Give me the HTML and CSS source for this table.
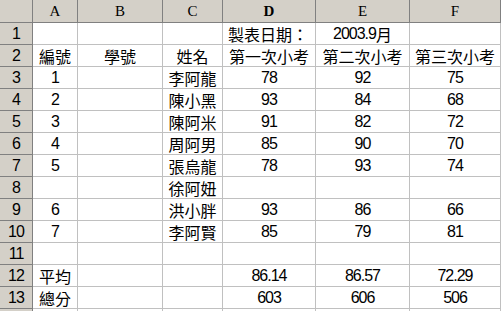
FILE: index.html
```html
<!DOCTYPE html>
<html lang="zh-Hant">
<head>
<meta charset="utf-8">
<title>成績表</title>
<link rel="stylesheet" href="styles.css">
</head>
<body>
<div class="sheet">
  <div class="corner"></div>
  <div class="colhead">A</div>
  <div class="colhead">B</div>
  <div class="colhead">C</div>
  <div class="colhead active">D</div>
  <div class="colhead">E</div>
  <div class="colhead">F</div>

  <div class="rowhead">1</div>
  <div class="cell"></div><div class="cell"></div><div class="cell"></div>
  <div class="cell left">製表日期：</div><div class="cell"><span class="num">2003.9</span>月</div><div class="cell"></div>

  <div class="rowhead">2</div>
  <div class="cell">編號</div><div class="cell">學號</div><div class="cell">姓名</div>
  <div class="cell">第一次小考</div><div class="cell">第二次小考</div><div class="cell">第三次小考</div>

  <div class="rowhead">3</div>
  <div class="cell num">1</div><div class="cell"></div><div class="cell">李阿龍</div>
  <div class="cell num">78</div><div class="cell num">92</div><div class="cell num">75</div>

  <div class="rowhead">4</div>
  <div class="cell num">2</div><div class="cell"></div><div class="cell">陳小黑</div>
  <div class="cell num">93</div><div class="cell num">84</div><div class="cell num">68</div>

  <div class="rowhead">5</div>
  <div class="cell num">3</div><div class="cell"></div><div class="cell">陳阿米</div>
  <div class="cell num">91</div><div class="cell num">82</div><div class="cell num">72</div>

  <div class="rowhead">6</div>
  <div class="cell num">4</div><div class="cell"></div><div class="cell">周阿男</div>
  <div class="cell num">85</div><div class="cell num">90</div><div class="cell num">70</div>

  <div class="rowhead">7</div>
  <div class="cell num">5</div><div class="cell"></div><div class="cell">張烏龍</div>
  <div class="cell num">78</div><div class="cell num">93</div><div class="cell num">74</div>

  <div class="rowhead">8</div>
  <div class="cell"></div><div class="cell"></div><div class="cell">徐阿妞</div>
  <div class="cell"></div><div class="cell"></div><div class="cell"></div>

  <div class="rowhead">9</div>
  <div class="cell num">6</div><div class="cell"></div><div class="cell">洪小胖</div>
  <div class="cell num">93</div><div class="cell num">86</div><div class="cell num">66</div>

  <div class="rowhead">10</div>
  <div class="cell num">7</div><div class="cell"></div><div class="cell">李阿賢</div>
  <div class="cell num">85</div><div class="cell num">79</div><div class="cell num">81</div>

  <div class="rowhead">11</div>
  <div class="cell"></div><div class="cell"></div><div class="cell"></div>
  <div class="cell"></div><div class="cell"></div><div class="cell"></div>

  <div class="rowhead">12</div>
  <div class="cell">平均</div><div class="cell"></div><div class="cell"></div>
  <div class="cell num">86.14</div><div class="cell num">86.57</div><div class="cell num">72.29</div>

  <div class="rowhead">13</div>
  <div class="cell">總分</div><div class="cell"></div><div class="cell"></div>
  <div class="cell num">603</div><div class="cell num">606</div><div class="cell num">506</div>

  <div class="rowhead"></div>
  <div class="cell"></div><div class="cell"></div><div class="cell"></div>
  <div class="cell"></div><div class="cell"></div><div class="cell"></div>
</div>
</body>
</html>
```

FILE: styles.css
```css
html, body {
  margin: 0;
  padding: 0;
  background: #ffffff;
  overflow: hidden;
}

.sheet {
  display: grid;
  grid-template-columns: 33px 45px 85px 60px 93px 94px 1fr;
  grid-template-rows: 23px repeat(14, 22px);
  width: 501px;
  height: 311px;
  overflow: hidden;
  font-family: "Noto Sans CJK TC", "Liberation Sans", sans-serif;
  font-size: 16px;
  color: #000000;
}

.corner,
.colhead,
.rowhead,
.cell {
  box-sizing: border-box;
  display: flex;
  align-items: center;
  justify-content: center;
  overflow: hidden;
  white-space: nowrap;
  line-height: 1;
}

.corner,
.colhead,
.rowhead {
  background: #d4d0c8;
  border-right: 1px solid #808080;
  border-bottom: 1px solid #808080;
}

.colhead {
  font-family: "Liberation Serif", serif;
  font-size: 15px;
  padding-top: 1px;
}

.colhead.active {
  font-weight: bold;
}

.rowhead {
  font-family: "Liberation Sans", sans-serif;
  font-size: 16px;
  letter-spacing: -1px;
  padding-top: 1px;
}

.cell {
  border-right: 1px solid #c0c0c0;
  border-bottom: 1px solid #c0c0c0;
  padding-top: 1px;
}

.cell.left {
  justify-content: flex-start;
  padding-left: 5px;
}

.num {
  font-family: "Liberation Sans", sans-serif;
  letter-spacing: -1px;
}
```
